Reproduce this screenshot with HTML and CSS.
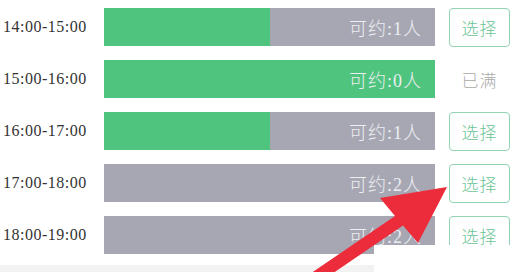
FILE: index.html
```html
<!DOCTYPE html>
<html lang="zh">
<head>
<meta charset="utf-8">
<link rel="stylesheet" href="styles.css">
</head>
<body>
<div class="page">
  <div class="list">
    <div class="row">
      <div class="time">14:00-15:00</div>
      <div class="bar"><div class="fill" style="width:50%"></div><span class="count">可约:1人</span></div>
      <div class="action"><button class="pick">选择</button></div>
    </div>
    <div class="row">
      <div class="time">15:00-16:00</div>
      <div class="bar"><div class="fill" style="width:100%"></div><span class="count">可约:0人</span></div>
      <div class="action"><span class="full">已满</span></div>
    </div>
    <div class="row">
      <div class="time">16:00-17:00</div>
      <div class="bar"><div class="fill" style="width:50%"></div><span class="count">可约:1人</span></div>
      <div class="action"><button class="pick">选择</button></div>
    </div>
    <div class="row">
      <div class="time">17:00-18:00</div>
      <div class="bar"><span class="count">可约:2人</span></div>
      <div class="action"><button class="pick">选择</button></div>
    </div>
    <div class="row">
      <div class="time">18:00-19:00</div>
      <div class="bar"><span class="count">可约:2人</span></div>
      <div class="action"><button class="pick">选择</button></div>
    </div>
  </div>
  <div class="strip"></div>
  <div class="cover"></div>
  <svg class="arrow" width="517" height="272" viewBox="0 0 517 272">
    <polygon points="301,280 395,216 380,198 447,187 418,243 403,225.5 323,280" fill="#ec2c3b"/>
  </svg>
</div>
</body>
</html>
```

FILE: styles.css
```css
html, body {
  margin: 0;
  padding: 0;
  background: #ffffff;
}
.page {
  position: relative;
  width: 517px;
  height: 272px;
  overflow: hidden;
}
.list {
  display: flex;
  flex-direction: column;
  gap: 14px;
  padding: 8px 7px 0 3px;
}
.row {
  display: flex;
  align-items: center;
  height: 38px;
}
.time {
  width: 101px;
  font-family: "Liberation Serif", serif;
  font-size: 16px;
  letter-spacing: 0.5px;
  color: #333333;
}
.bar {
  position: relative;
  width: 331px;
  height: 38px;
  background: #a7a7b4;
  display: flex;
  align-items: center;
  justify-content: flex-end;
}
.fill {
  position: absolute;
  left: 0;
  top: 0;
  bottom: 0;
  background: #4ec47e;
}
.count {
  position: relative;
  padding-right: 13px;
  font-family: "Liberation Serif", "Noto Sans CJK SC", sans-serif;
  font-size: 18px;
  font-weight: 300;
  letter-spacing: 1px;
  color: #eceef0;
}
.action {
  margin-left: 14px;
  width: 61px;
  height: 39px;
  display: flex;
  align-items: center;
  justify-content: center;
}
.pick {
  box-sizing: border-box;
  width: 61px;
  height: 39px;
  background: #ffffff;
  border: 1.5px solid #92d4b2;
  border-radius: 4px;
  font-family: "Noto Sans CJK SC", sans-serif;
  font-size: 17px;
  font-weight: 300;
  letter-spacing: 1px;
  color: #6cc496;
  padding: 0;
}
.full {
  font-family: "Noto Sans CJK SC", sans-serif;
  font-size: 17px;
  font-weight: 300;
  letter-spacing: 1px;
  color: #a9a9a9;
}
.strip {
  position: absolute;
  left: 0;
  right: 0;
  top: 265px;
  bottom: 0;
  background: #f2f2f2;
}
.cover {
  position: absolute;
  left: 374px;
  right: 0;
  top: 245px;
  bottom: 0;
  background: #ffffff;
}
.arrow {
  position: absolute;
  left: 0;
  top: 0;
}
```
